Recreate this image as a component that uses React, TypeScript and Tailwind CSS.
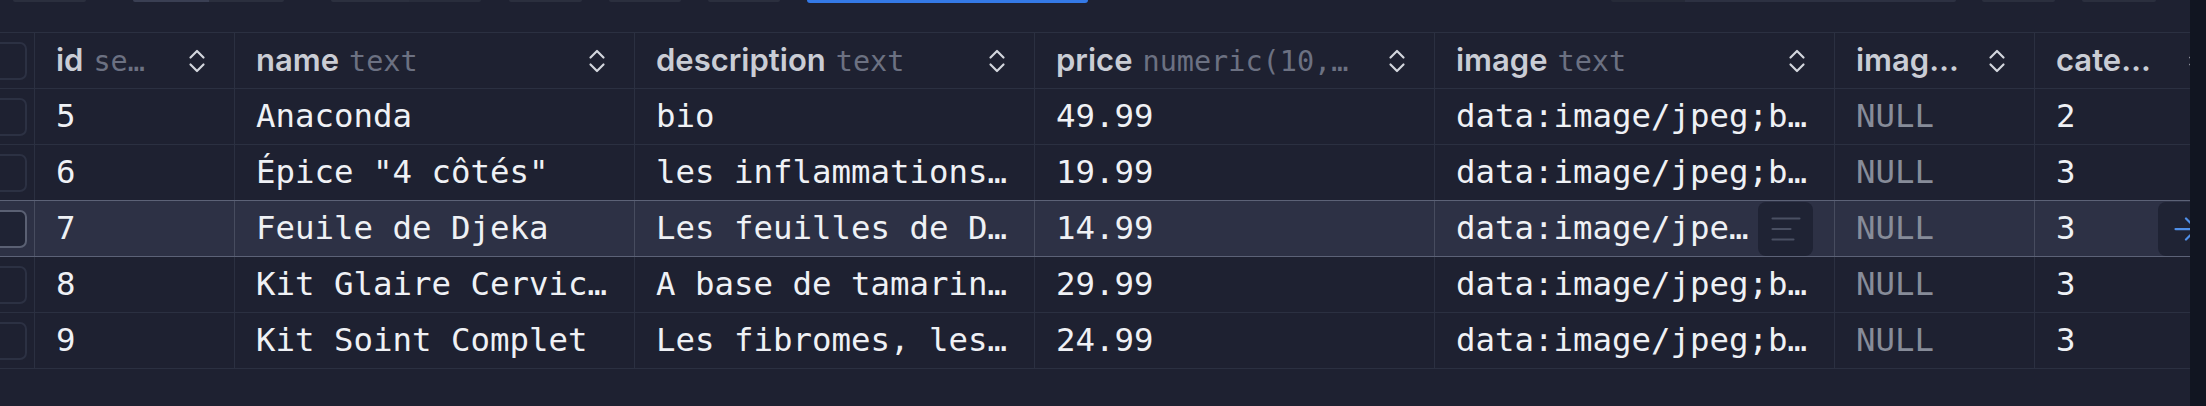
import React from 'react'
import { AlignLeft, ArrowRight } from 'lucide-react'

type Row = {
  id: number
  name: string
  description: string
  price: string
  image: string
  imageUrl: string | null
  categoryId: number
}

const rows: Row[] = [
  { id: 5, name: 'Anaconda', description: 'bio', price: '49.99', image: 'data:image/jpeg;base64,/9j/4AAQSkZJRgABAQ', imageUrl: null, categoryId: 2 },
  { id: 6, name: 'Épice "4 côtés"', description: 'les inflammations, les douleurs articulaires', price: '19.99', image: 'data:image/jpeg;base64,/9j/4AAQSkZJRgABAQ', imageUrl: null, categoryId: 3 },
  { id: 7, name: 'Feuile de Djeka', description: 'Les feuilles de Djeka sont utilisées', price: '14.99', image: 'data:image/jpeg;base64,/9j/4AAQSkZJRgABAQ', imageUrl: null, categoryId: 3 },
  { id: 8, name: 'Kit Glaire Cervicale', description: 'A base de tamarinier et de plantes', price: '29.99', image: 'data:image/jpeg;base64,/9j/4AAQSkZJRgABAQ', imageUrl: null, categoryId: 3 },
  { id: 9, name: 'Kit Soint Complet', description: 'Les fibromes, les kystes, les règles', price: '24.99', image: 'data:image/jpeg;base64,/9j/4AAQSkZJRgABAQ', imageUrl: null, categoryId: 3 },
]

const selectedId = 7

// gap is the space kept between the label and the sort arrows
const columns = [
  { name: 'id', type: 'serial', width: 'w-[200px]', gap: 'gap-[28px]' },
  { name: 'name', type: 'text', width: 'w-[400px]', gap: 'gap-[28px]' },
  { name: 'description', type: 'text', width: 'w-[400px]', gap: 'gap-[28px]' },
  { name: 'price', type: 'numeric(10,2)', width: 'w-[400px]', gap: 'gap-[28px]' },
  { name: 'image', type: 'text', width: 'w-[400px]', gap: 'gap-[28px]' },
  { name: 'image_url', type: 'text', width: 'w-[200px]', gap: 'gap-[16px]' },
  { name: 'category_id', type: 'int4', width: 'w-[200px]', gap: 'gap-[22px]' },
]

const mono = "font-['DejaVu_Sans_Mono',monospace]"

const SortIcon = () => (
  <svg width="18" height="28" viewBox="0 0 18 28" fill="none" className="shrink-0 text-[#d3d6dd]">
    <path d="M2.5 10.5 L9 4 L15.5 10.5" stroke="currentColor" strokeWidth="2.2" strokeLinecap="round" strokeLinejoin="round" />
    <path d="M2.5 17.5 L9 24 L15.5 17.5" stroke="currentColor" strokeWidth="2.2" strokeLinecap="round" strokeLinejoin="round" />
  </svg>
)

const Checkbox = ({ active }: { active?: boolean }) => (
  <div
    className={
      active
        ? 'w-[38px] h-[38px] shrink-0 rounded-[7px] border-2 border-[#5a6073] bg-[#1f2334]'
        : 'w-[38px] h-[38px] shrink-0 rounded-[7px] border-2 border-[#2c3143]'
    }
  />
)

const Toolbar = () => (
  <div className="h-[32px] flex items-start">
    <div className="ml-[13px] w-[73px] h-[2px] rounded-b-[2px] bg-[#2b2f3e]" />
    <div className="ml-[47px] flex h-[2px] rounded-b-[2px] overflow-hidden">
      <div className="w-[76px] bg-[#3a3f53]" />
      <div className="w-[75px] bg-[#2b2f3e]" />
    </div>
    <div className="ml-[47px] flex h-[2px] rounded-b-[2px] overflow-hidden">
      <div className="w-[78px] bg-[#2c303f]" />
      <div className="w-[72px] bg-[#292d3c]" />
    </div>
    <div className="ml-[28px] w-[73px] h-[2px] rounded-b-[2px] bg-[#2b2f3e]" />
    <div className="ml-[27px] w-[72px] h-[2px] rounded-b-[2px] bg-[#2b2f3e]" />
    <div className="ml-[27px] w-[72px] h-[2px] rounded-b-[2px] bg-[#2b2f3e]" />
    <div className="ml-[27px] w-[281px] h-[3px] rounded-b-[3px] bg-[#3479e6]" />
    <div className="ml-[523px] flex h-[2px] rounded-b-[2px] overflow-hidden">
      <div className="w-[74px] bg-[#262a38]" />
      <div className="w-[271px] bg-[#2d3142]" />
    </div>
    <div className="ml-[26px] w-[73px] h-[2px] rounded-b-[2px] bg-[#2b2f3e]" />
    <div className="ml-[27px] w-[74px] h-[2px] rounded-b-[2px] bg-[#2b2f3e]" />
  </div>
)

const HeaderRow = () => (
  <div className="flex h-[57px] border-y border-[#2b3041]">
    <div className="w-[35px] shrink-0 flex items-center justify-end pr-[7px] overflow-hidden border-r border-[#2b3041]">
      <Checkbox />
    </div>
    {columns.map((c) => (
      <div
        key={c.name}
        className={`${c.width} ${c.gap} shrink-0 flex items-center pl-[21px] pr-[28px] border-r border-[#2b3041] overflow-hidden`}
      >
        <div className="flex-1 min-w-0 flex items-baseline">
          <span className="min-w-0 truncate font-['Inter',sans-serif] font-semibold text-[31px] text-[#cacdd5]">
            {c.name}
          </span>
          <span className={`ml-[10px] min-w-0 shrink-[1000] truncate ${mono} text-[28.5px] text-[#6c7182]`}>
            {c.type}
          </span>
        </div>
        <SortIcon />
      </div>
    ))}
  </div>
)

const DataRow = ({ row, nextSelected }: { row: Row; nextSelected: boolean }) => {
  const selected = row.id === selectedId
  const line = selected || nextSelected ? 'border-[#5c6277]' : 'border-[#2b3041]'
  const vline = selected ? 'border-[#474c5f]' : 'border-[#2b3041]'
  const cell = `shrink-0 flex items-center px-[21px] border-r ${vline} overflow-hidden`
  const text = `truncate ${mono} text-[32.4px] text-[#eff1f5]`

  return (
    <div className={`flex h-[56px] border-b ${line} ${selected ? 'bg-[#2d3145]' : ''}`}>
      <div className={`w-[35px] shrink-0 flex items-center justify-end pr-[7px] overflow-hidden border-r ${vline}`}>
        <Checkbox active={selected} />
      </div>
      <div className={`w-[200px] ${cell}`}>
        <span className={text}>{row.id}</span>
      </div>
      <div className={`w-[400px] ${cell}`}>
        <span className={text}>{row.name}</span>
      </div>
      <div className={`w-[400px] ${cell}`}>
        <span className={text}>{row.description}</span>
      </div>
      <div className={`w-[400px] ${cell}`}>
        <span className={text}>{row.price}</span>
      </div>
      <div className={`w-[400px] ${cell} gap-[6px]`}>
        <span className={`flex-1 min-w-0 ${text}`}>{row.image}</span>
        {selected && (
          <button className="w-[55px] h-[54px] shrink-0 rounded-[8px] bg-[#1f2334] flex items-center justify-center">
            <AlignLeft size={36} strokeWidth={1.4} className="text-[#4a5063]" />
          </button>
        )}
      </div>
      <div className={`w-[200px] ${cell}`}>
        <span className={`truncate ${mono} text-[32.4px] text-[#878c99]`}>{row.imageUrl ?? 'NULL'}</span>
      </div>
      <div className={`w-[200px] ${cell} justify-between`}>
        <span className={text}>{row.categoryId}</span>
        {selected && (
          <button className="w-[55px] h-[54px] shrink-0 rounded-[8px] bg-[#1f2334] flex items-center justify-center">
            <ArrowRight size={36} strokeWidth={1.5} className="text-[#4f8fe8]" />
          </button>
        )}
      </div>
    </div>
  )
}

export default function App() {
  return (
    <div className="w-[2206px] h-[406px] flex bg-[#1e2131] overflow-hidden">
      <div className="flex-1 min-w-0 flex flex-col overflow-hidden">
        <Toolbar />
        <div className="flex flex-col">
          <HeaderRow />
          {rows.map((r, i) => (
            <DataRow key={r.id} row={r} nextSelected={rows[i + 1]?.id === selectedId} />
          ))}
        </div>
      </div>
      <div className="w-[16px] shrink-0 bg-[#111521]" />
    </div>
  )
}
